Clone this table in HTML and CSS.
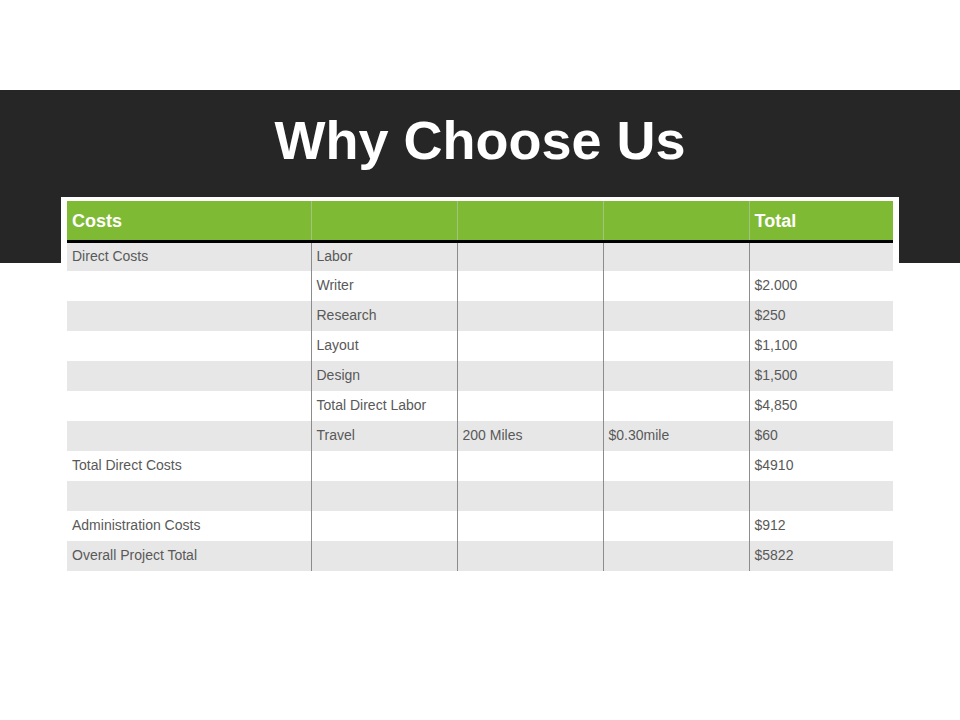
FILE: index.html
```html
<!DOCTYPE html>
<html>
<head>
<meta charset="utf-8">
<link rel="stylesheet" href="styles.css">
</head>
<body>
<div class="page">
  <div class="band">
    <h1 class="title">Why Choose Us</h1>
  </div>
  <div class="card">
    <table class="costs">
      <colgroup>
        <col class="c1"><col class="c2"><col class="c3"><col class="c4"><col class="c5">
      </colgroup>
      <thead>
        <tr><th>Costs</th><th></th><th></th><th></th><th>Total</th></tr>
      </thead>
      <tbody>
        <tr><td>Direct Costs</td><td>Labor</td><td></td><td></td><td></td></tr>
        <tr><td></td><td>Writer</td><td></td><td></td><td>$2.000</td></tr>
        <tr><td></td><td>Research</td><td></td><td></td><td>$250</td></tr>
        <tr><td></td><td>Layout</td><td></td><td></td><td>$1,100</td></tr>
        <tr><td></td><td>Design</td><td></td><td></td><td>$1,500</td></tr>
        <tr><td></td><td>Total Direct Labor</td><td></td><td></td><td>$4,850</td></tr>
        <tr><td></td><td>Travel</td><td>200 Miles</td><td>$0.30mile</td><td>$60</td></tr>
        <tr><td>Total Direct Costs</td><td></td><td></td><td></td><td>$4910</td></tr>
        <tr><td></td><td></td><td></td><td></td><td></td></tr>
        <tr><td>Administration Costs</td><td></td><td></td><td></td><td>$912</td></tr>
        <tr><td>Overall Project Total</td><td></td><td></td><td></td><td>$5822</td></tr>
      </tbody>
    </table>
  </div>
</div>
</body>
</html>
```
FILE: styles.css
```css
html, body {
  margin: 0;
  padding: 0;
  background: #ffffff;
}
.page {
  width: 960px;
  height: 720px;
  padding-top: 90px;
  box-sizing: border-box;
  font-family: "Liberation Sans", Arial, sans-serif;
}
.band {
  height: 173px;
  background: #262626;
  padding-top: 18px;
  box-sizing: border-box;
}
.title {
  margin: 0;
  text-align: center;
  color: #ffffff;
  font-size: 54px;
  line-height: 64px;
  font-weight: bold;
}
.card {
  width: 838px;
  margin: -66px 0 0 61px;
  padding: 4px 6px;
  box-sizing: border-box;
  background: #ffffff;
  position: relative;
}
.costs {
  width: 826px;
  border-collapse: collapse;
  table-layout: fixed;
}
.c1 { width: 244px; }
.c2 { width: 146px; }
.c3 { width: 146px; }
.c4 { width: 146px; }
.c5 { width: 144px; }
.costs th {
  background: #7fba35;
  color: #ffffff;
  font-size: 18px;
  font-weight: bold;
  text-align: left;
  height: 40px;
  padding: 2px 5px 0;
  border-bottom: 3px solid #000000;
  box-sizing: border-box;
}
.costs td {
  height: 30px;
  padding: 0 5px 2px;
  font-size: 14px;
  color: #595959;
  box-sizing: border-box;
  white-space: nowrap;
}
.costs th + th {
  border-left: 1px solid #a3c47e;
}
.costs td + td {
  border-left: 1px solid #8c8c8c;
}
.costs tbody tr:nth-child(odd) td {
  background: #e7e7e7;
}
```
